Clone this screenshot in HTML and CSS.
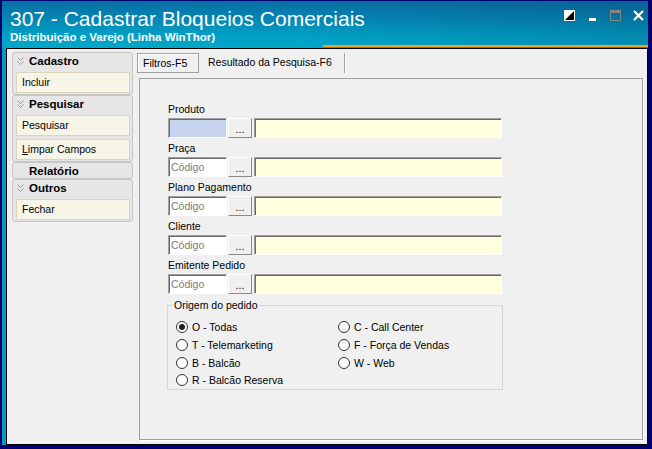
FILE: index.html
```html
<!DOCTYPE html>
<html lang="pt-BR">
<head>
<meta charset="utf-8"/>
<title>307 - Cadastrar Bloqueios Comerciais</title>
<link rel="stylesheet" href="styles.css">
</head>
<body>
<div class="window">
  <div class="titlebar">
    <div class="titles">
      <div class="title">307 - Cadastrar Bloqueios Comerciais</div>
      <div class="subtitle">Distribuição e Varejo (Linha WinThor)</div>
    </div>
    <div class="controls">
      <svg viewBox="0 0 11 11"><rect width="11" height="11" fill="#fff"/><path d="M10 1V10H1Z" fill="#000"/></svg>
      <svg viewBox="0 0 11 11"><rect x="2" y="8" width="7" height="3" fill="#fff"/></svg>
      <svg viewBox="0 0 11 11"><rect x="0.5" y="0.5" width="10" height="10" fill="none" stroke="#868686"/><rect x="0" y="0" width="11" height="3" fill="#868686"/></svg>
      <svg viewBox="0 0 11 11"><path d="M1 1L10 10M10 1L1 10" stroke="#fff" stroke-width="2.2"/></svg>
    </div>
  </div>

  <div class="client">
    <div class="sidebar">
      <div class="group">
        <div class="group-head"><svg class="chev" viewBox="0 0 7 8"><path d="M0.5 0.5L3.5 3.5L6.5 0.5M0.5 4.5L3.5 7.5L6.5 4.5" fill="none" stroke="#9a9a9a"/></svg>Cadastro</div>
        <div class="item">Incluir</div>
      </div>
      <div class="group">
        <div class="group-head"><svg class="chev" viewBox="0 0 7 8"><path d="M0.5 0.5L3.5 3.5L6.5 0.5M0.5 4.5L3.5 7.5L6.5 4.5" fill="none" stroke="#9a9a9a"/></svg>Pesquisar</div>
        <div class="item">Pesquisar</div>
        <div class="item"><u>L</u>impar Campos</div>
      </div>
      <div class="group empty">
        <div class="group-head plain">Relatório</div>
      </div>
      <div class="group">
        <div class="group-head"><svg class="chev" viewBox="0 0 7 8"><path d="M0.5 0.5L3.5 3.5L6.5 0.5M0.5 4.5L3.5 7.5L6.5 4.5" fill="none" stroke="#9a9a9a"/></svg>Outros</div>
        <div class="item">Fechar</div>
      </div>
    </div>

    <div class="main">
      <div class="tabs">
        <div class="tab active">Filtros-F5</div>
        <div class="tab">Resultado da Pesquisa-F6</div>
      </div>
      <div class="panel">
        <div class="field">
          <div class="label">Produto</div>
          <div class="row"><div class="code focus"></div><div class="btn">...</div><div class="desc"></div></div>
        </div>
        <div class="field">
          <div class="label">Praça</div>
          <div class="row"><div class="code">Código</div><div class="btn">...</div><div class="desc"></div></div>
        </div>
        <div class="field">
          <div class="label">Plano Pagamento</div>
          <div class="row"><div class="code">Código</div><div class="btn">...</div><div class="desc"></div></div>
        </div>
        <div class="field">
          <div class="label">Cliente</div>
          <div class="row"><div class="code">Código</div><div class="btn">...</div><div class="desc"></div></div>
        </div>
        <div class="field">
          <div class="label">Emitente Pedido</div>
          <div class="row"><div class="code">Código</div><div class="btn">...</div><div class="desc"></div></div>
        </div>

        <fieldset class="origem">
          <legend>Origem do pedido</legend>
          <div class="radios">
            <div class="radio checked"><span class="dot"></span>O - Todas</div>
            <div class="radio"><span class="dot"></span>T - Telemarketing</div>
            <div class="radio"><span class="dot"></span>B - Balcão</div>
            <div class="radio"><span class="dot"></span>R - Balcão Reserva</div>
            <div class="radio"><span class="dot"></span>C - Call Center</div>
            <div class="radio"><span class="dot"></span>F - Força de Vendas</div>
            <div class="radio"><span class="dot"></span>W - Web</div>
          </div>
        </fieldset>
      </div>
    </div>
  </div>
</div>
</body>
</html>
```

FILE: styles.css
```css
body {
  margin: 0;
  background: #00006e;
  font-family: "Liberation Sans", Arial, sans-serif;
  font-size: 10.5px;
  color: #000;
}
.window {
  width: 652px;
  height: 449px;
  box-sizing: border-box;
  border-style: solid;
  border-color: #00006e;
  border-width: 1px 4px 4px 2px;
  background: #0a98bf;
  display: flex;
  flex-direction: column;
}

/* title bar */
.titlebar {
  height: 47px;
  flex: none;
  display: flex;
  justify-content: space-between;
  padding-left: 8px;
  color: #fff;
  background:
    linear-gradient(#eea42a, #eea42a) right 0 bottom 1px / 325px 2px no-repeat,
    linear-gradient(100deg, rgba(0,20,60,0) 45%, rgba(0,20,60,.16) 100%),
    linear-gradient(180deg, #0a6ea3 0%, #0584b2 35%, #01a0c4 75%, #00a8ca 100%);
}
.title {
  font-size: 21px;
  line-height: 24px;
  margin-top: 6px;
}
.subtitle {
  font-weight: bold;
  font-size: 11.5px;
  line-height: 13px;
}
.controls {
  display: flex;
  gap: 12px;
  padding: 9px 4px 0 0;
  align-items: flex-start;
}
.controls svg {
  width: 11px;
  height: 11px;
  display: block;
}

/* client area */
.client {
  flex: 1;
  margin-left: 4px;
  border: 1px solid #000;
  background: #f0f0f0;
  display: flex;
}
.sidebar {
  width: 130px;
  flex: none;
  box-sizing: border-box;
  padding: 3px 0 0 5px;
}
.group {
  width: 121px;
  box-sizing: border-box;
  border: 1px solid #c6c6c6;
  border-radius: 3px;
  background: #e6e6e6;
  padding-bottom: 1px;
}
.group.empty {
  padding-bottom: 0;
}
.group-head {
  height: 16px;
  line-height: 16px;
  font-weight: bold;
  font-size: 11.5px;
  display: flex;
  align-items: center;
  padding-left: 4px;
}
.group.empty .group-head {
  height: 15px;
}
.group-head.plain {
  padding-left: 16px;
}
.chev {
  width: 7px;
  height: 8px;
  margin-right: 5px;
}
.item {
  margin: 3px 2px 0 3px;
  height: 21px;
  box-sizing: border-box;
  border: 1px solid #d9d5b6;
  background: #f6f5e8;
  line-height: 19px;
  padding-left: 5px;
}

/* tabs */
.main {
  flex: 1;
  display: flex;
  flex-direction: column;
  padding: 4px 4px 4px 0;
}
.tabs {
  display: flex;
  height: 20px;
  flex: none;
}
.tab {
  box-sizing: border-box;
  height: 20px;
  line-height: 18px;
  border-right: 1px solid #a0a0a0;
  box-shadow: 1px 0 0 #fff;
  width: 146px;
  padding-left: 9px;
}
.tab.active {
  width: 62px;
  border: 1px solid #a0a0a0;
  box-shadow: inset 1px 1px 0 #fff;
  padding-left: 5px;
}
.panel {
  flex: 1;
  margin: 5px 0 0 2px;
  border: 1px solid #a0a0a0;
  box-shadow: 1px 1px 0 #fff;
  padding: 22px 0 0 28px;
}

/* filter fields */
.field {
  margin-bottom: 2px;
}
.label {
  line-height: 16px;
  margin-bottom: 1px;
}
.row {
  display: flex;
  height: 20px;
}
.code, .desc {
  box-sizing: border-box;
  border: 1px solid;
  border-color: #a0a0a0 #fff #fff #a0a0a0;
  box-shadow: inset 1px 1px 0 #696969;
}
.code {
  width: 59px;
  background: #fff;
  color: #7a7a7a;
  line-height: 18px;
  padding-left: 2px;
}
.code.focus {
  background: #c6d3ef;
}
.btn {
  width: 24px;
  margin-left: 1px;
  box-sizing: border-box;
  border: 1px solid;
  border-color: #fff #8a8a8a #8a8a8a #fff;
  background: #f0f0f0;
  text-align: center;
  line-height: 21px;
}
.desc {
  width: 248px;
  margin-left: 2px;
  background: #ffffde;
}

/* origem do pedido */
.origem {
  width: 336px;
  box-sizing: border-box;
  margin: 4px 0 0 -1px;
  border: 1px solid #d5d5d5;
  padding: 0 4px 0;
}
.origem legend {
  padding: 0 2px;
  line-height: 14px;
}
.radios {
  display: grid;
  grid-template-columns: 162px 1fr;
  grid-template-rows: 18px 18px 17px 18px;
  grid-auto-flow: column;
  padding: 6px 0 0 4px;
}
.radio {
  display: flex;
  align-items: center;
  gap: 4px;
}
.dot {
  width: 12px;
  height: 12px;
  box-sizing: border-box;
  border: 1px solid #333;
  border-radius: 50%;
  background: #fff;
  display: flex;
  align-items: center;
  justify-content: center;
}
.radio.checked .dot::after {
  content: "";
  width: 6px;
  height: 6px;
  border-radius: 50%;
  background: #222;
}
```
